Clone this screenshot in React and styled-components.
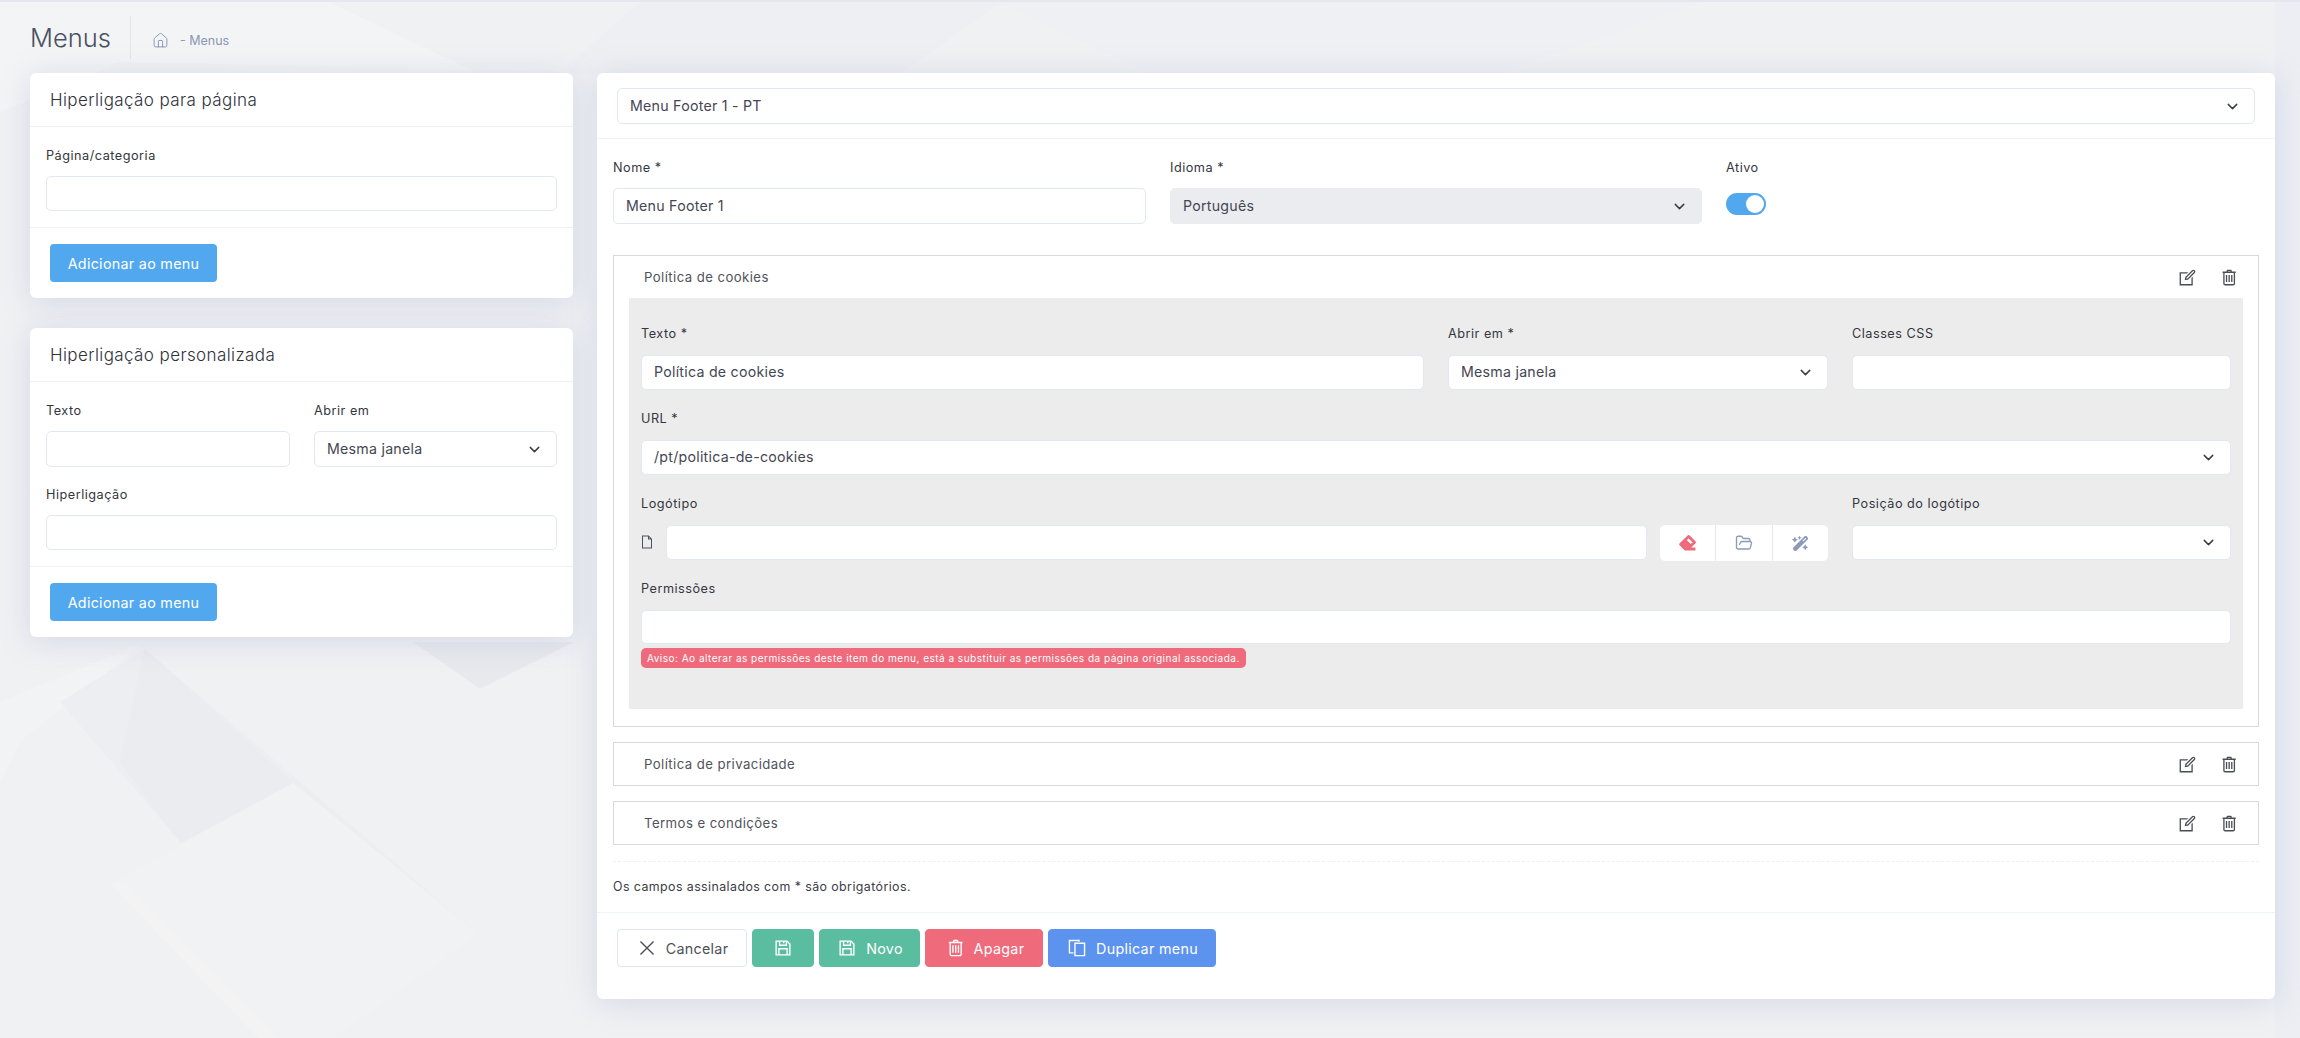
import React from 'react'
import styled, {createGlobalStyle} from 'styled-components'
import {ChevronDown, FolderOpen, House} from 'lucide-react'
import {LiaEdit, LiaTrashAltSolid, LiaSave, LiaTimesSolid, LiaCopy, LiaFile} from 'react-icons/lia'
import {RiEraserFill} from 'react-icons/ri'
import {FaWandMagicSparkles} from 'react-icons/fa6'

const GlobalStyle = createGlobalStyle`
  html, body {
    margin: 0;
    padding: 0;
    background: #f0f1f3;
  }
  * {
    box-sizing: border-box;
  }
  body {
    font-family: Inter, "Noto Sans", sans-serif;
    color: #2b2d36;
  }
`

const Page = styled.div`
  position: relative;
  width: 2300px;
  height: 1038px;
  overflow: hidden;
  border-top: 2px solid #e5e7f0;
`
const Backdrop = styled.svg`
  position: absolute;
  top: 0;
  left: 0;
  width: 2300px;
  height: 1038px;
`
const Layer = styled.div`
  position: relative;
`
const PageHeader = styled.header`
  display: flex;
  align-items: center;
  height: 71px;
  padding-left: 30px;
`
const PageTitle = styled.h1`
  margin: 0 20px 0 0;
  font-size: 25.5px;
  font-weight: 300;
  color: #495163;
  width: 80px;
`
const Divider = styled.span`
  width: 1px;
  height: 43px;
  background: #e2e4ea;
  margin-right: 21px;
`
const Crumb = styled.span`
  display: flex;
  align-items: center;
  gap: 11px;
  margin-top: 6px;
  font-size: 12.5px;
  color: #8c98b4;
  svg {
    width: 17px;
    height: 17px;
    stroke-width: 1.4;
  }
`
const Columns = styled.div`
  display: grid;
  grid-template-columns: 543px 1678px;
  gap: 24px;
  padding-left: 30px;
  align-items: start;
`
const Side = styled.div`
  display: flex;
  flex-direction: column;
  gap: 30px;
`
const Card = styled.section`
  background: #fff;
  border-radius: 6px;
  box-shadow: 0 4px 30px rgba(150, 160, 205, 0.3);
`
const CardTitle = styled.h2`
  margin: 0;
  height: 54px;
  display: flex;
  align-items: center;
  padding: 0 20px;
  font-size: 17px;
  font-weight: 300;
  letter-spacing: 0.4px;
  color: #2f323c;
  border-bottom: 1px solid #eef1f8;
`
const CardBody = styled.div`
  padding: 19px 16px 16px;
  display: flex;
  flex-direction: column;
  gap: 18px;
`
const CardFooter = styled.div`
  border-top: 1px solid #f1f2f6;
  padding: 16px 20px;
  display: flex;
  gap: 5px;
`
const Row = styled.div`
  display: grid;
  grid-template-columns: ${({$cols}) => $cols};
  gap: 24px;
`
const Field = styled.div`
  min-width: 0;
`
const Label = styled.div`
  height: 20px;
  line-height: 20px;
  margin-bottom: ${({$gap}) => $gap || 10}px;
  font-size: 12.7px;
  letter-spacing: 0.5px;
  color: #34363e;
`
const TextInput = styled.input`
  display: block;
  width: 100%;
  height: ${({$h}) => $h || 36}px;
  padding: 0 12px 2px;
  background: #fff;
  border: 1px solid #e3e7f4;
  border-radius: 5px;
  font: inherit;
  font-size: 14.2px;
  letter-spacing: 0.25px;
  color: #434653;
  outline: none;
`
const SelectBox = styled.div`
  display: flex;
  align-items: center;
  justify-content: space-between;
  height: ${({$h}) => $h || 36}px;
  padding: 0 13px 0 12px;
  background: ${({$muted}) => ($muted ? '#ebecf0' : '#fff')};
  border: 1px solid ${({$muted}) => ($muted ? '#ebecf0' : '#e3e7f4')};
  border-radius: 5px;
  font-size: 14.2px;
  letter-spacing: 0.25px;
  color: #434653;
  span {
    margin-top: -2px;
  }
  svg {
    width: 17px;
    height: 17px;
    color: #3a3d47;
  }
`
const PrimaryButton = styled.button`
  width: 167px;
  height: 38px;
  border: 0;
  border-radius: 4px;
  background: #52a8ef;
  color: #fff;
  font: inherit;
  font-size: 14.3px;
  letter-spacing: 0.3px;
`
const MenuSelectRow = styled.div`
  padding: 15px 20px 14px;
  border-bottom: 1px solid #eef1f8;
`
const MainBody = styled.div`
  padding: 19px 16px 15px;
`
const Switch = styled.span`
  display: block;
  position: relative;
  width: 40px;
  height: 22px;
  border-radius: 11px;
  background: #52a8ef;
  &::after {
    content: '';
    position: absolute;
    top: 2px;
    right: 2px;
    width: 18px;
    height: 18px;
    border-radius: 50%;
    background: #fff;
  }
`
const ItemList = styled.div`
  display: flex;
  flex-direction: column;
  gap: 15px;
  margin-top: 31px;
`
const Item = styled.div`
  border: 1px solid #d9d9db;
  background: #fff;
  padding-bottom: ${({$open}) => ($open ? 17 : 0)}px;
`
const ItemHead = styled.div`
  display: flex;
  align-items: center;
  justify-content: space-between;
  height: 42px;
  padding: 0 19px 0 30px;
  font-size: 13.2px;
  letter-spacing: 0.42px;
  color: #50535c;
`
const ItemActions = styled.div`
  display: flex;
  gap: 20px;
  color: #4b4d55;
  svg {
    width: 21px;
    height: 21px;
    display: block;
  }
`
const ItemPanel = styled.div`
  margin: 0 15px;
  padding: 26px 12px 41px;
  background: #ececed;
  display: flex;
  flex-direction: column;
  gap: 19px;
`
const FileRow = styled.div`
  display: flex;
  align-items: flex-start;
`
const FileIcon = styled(LiaFile)`
  flex: none;
  width: 16px;
  height: 16px;
  margin: 9px 11px 0 -2px;
  color: #50525a;
`
const FileButtons = styled.div`
  flex: none;
  display: flex;
  width: 168px;
  height: 36px;
  margin: 0 0 -1px 13px;
  background: #fff;
  border-radius: 5px;
`
const FileButton = styled.span`
  flex: 1;
  display: flex;
  align-items: center;
  justify-content: center;
  color: ${({$color}) => $color};
  border-left: ${({$first}) => ($first ? '0' : '1px solid #e6e9f2')};
  svg {
    width: ${({$size}) => $size || 16}px;
    height: ${({$size}) => $size || 16}px;
    stroke-width: 1.8;
  }
`
const Warning = styled.div`
  width: fit-content;
  height: 20px;
  line-height: 20px;
  margin-top: 4px;
  padding: 0 6px;
  border-radius: 5px;
  background: #ef6a7a;
  color: #fff;
  font-size: 10.1px;
  letter-spacing: 0.45px;
`
const DashedRule = styled.div`
  margin-top: 16px;
  border-top: 1px dashed #eff0f2;
`
const Note = styled.p`
  margin: 15px 0 0;
  line-height: 20px;
  font-size: 12.4px;
  letter-spacing: 0.42px;
  color: #3a3c45;
`
const MainFooter = styled.div`
  border-top: 1px solid #eff3fa;
  padding: 16px 20px 32px;
  display: flex;
  gap: 5px;
`
const ActionButton = styled.button`
  display: flex;
  align-items: center;
  justify-content: center;
  gap: 8px;
  width: ${({$w}) => $w}px;
  height: 38px;
  padding: 0;
  border: 1px solid ${({$bg}) => $bg || '#e1e5f2'};
  border-radius: 4px;
  background: ${({$bg}) => $bg || '#fff'};
  color: ${({$bg}) => ($bg ? '#fff' : '#4e5058')};
  font: inherit;
  font-size: 14.3px;
  letter-spacing: 0.3px;
  svg {
    width: 22px;
    height: 22px;
  }
`

const Select = ({children, ...props}) => (
  <SelectBox {...props}>
    <span>{children}</span>
    <ChevronDown />
  </SelectBox>
)

const AddToMenu = () => (
  <CardFooter>
    <PrimaryButton>Adicionar ao menu</PrimaryButton>
  </CardFooter>
)

const MenuItem = ({title, open, children}) => (
  <Item $open={open}>
    <ItemHead>
      <span>{title}</span>
      <ItemActions>
        <LiaEdit />
        <LiaTrashAltSolid />
      </ItemActions>
    </ItemHead>
    {children}
  </Item>
)

const Background = () => (
  <Backdrop viewBox="0 0 2300 1038">
    <polygon points="0,0 640,0 560,70 120,60 0,110" fill="#f3f4f5" />
    <polygon points="330,0 1000,0 900,72 480,72" fill="#eceef2" opacity="0.5" />
    <polygon points="1000,0 1700,0 1500,72 1150,72" fill="#eff0f4" />
    <polygon points="413,640 480,687 574,640" fill="#e8e9ed" />
    <polygon points="0,700 145,640 20,740 0,780" fill="#f2f3f4" />
    <polygon points="145,647 478,932 293,781 181,841 60,700" fill="#edeef1" />
    <polygon points="145,647 293,781 181,841 120,760" fill="#e9eaee" opacity="0.5" />
    <polygon points="293,781 478,932 330,1038 260,1038 111,882" fill="#f1f2f4" />
    <polygon points="111,882 125,880 280,1038 260,1038" fill="#f3f3f4" />
    <polygon points="2275,0 2300,0 2300,1038 2275,1038" fill="#eceef3" />
  </Backdrop>
)

export default function App() {
  return (
    <Page>
      <GlobalStyle />
      <Background />
      <Layer>
        <PageHeader>
          <PageTitle>Menus</PageTitle>
          <Divider />
          <Crumb>
            <House />
            <span>- Menus</span>
          </Crumb>
        </PageHeader>
        <Columns>
          <Side>
            <Card>
              <CardTitle>Hiperligação para página</CardTitle>
              <CardBody>
                <Field>
                  <Label>Página/categoria</Label>
                  <TextInput readOnly $h={35} />
                </Field>
              </CardBody>
              <AddToMenu />
            </Card>
            <Card>
              <CardTitle>Hiperligação personalizada</CardTitle>
              <CardBody>
                <Row $cols="244px 243px">
                  <Field>
                    <Label>Texto</Label>
                    <TextInput readOnly />
                  </Field>
                  <Field>
                    <Label>Abrir em</Label>
                    <Select>Mesma janela</Select>
                  </Field>
                </Row>
                <Field>
                  <Label>Hiperligação</Label>
                  <TextInput readOnly $h={35} />
                </Field>
              </CardBody>
              <AddToMenu />
            </Card>
          </Side>
          <Card>
            <MenuSelectRow>
              <Select>Menu Footer 1 - PT</Select>
            </MenuSelectRow>
            <MainBody>
              <Row $cols="533px 532px 1fr">
                <Field>
                  <Label>Nome *</Label>
                  <TextInput readOnly defaultValue="Menu Footer 1" />
                </Field>
                <Field>
                  <Label>Idioma *</Label>
                  <Select $muted>Português</Select>
                </Field>
                <Field>
                  <Label $gap={15}>Ativo</Label>
                  <Switch />
                </Field>
              </Row>
              <ItemList>
                <MenuItem title="Política de cookies" open>
                  <ItemPanel>
                    <Row $cols="783px 380px 1fr">
                      <Field>
                        <Label $gap={11}>Texto *</Label>
                        <TextInput readOnly $h={35} defaultValue="Política de cookies" />
                      </Field>
                      <Field>
                        <Label $gap={11}>Abrir em *</Label>
                        <Select $h={35}>Mesma janela</Select>
                      </Field>
                      <Field>
                        <Label $gap={11}>Classes CSS</Label>
                        <TextInput readOnly $h={35} />
                      </Field>
                    </Row>
                    <Field>
                      <Label $gap={11}>URL *</Label>
                      <Select $h={35}>/pt/politica-de-cookies</Select>
                    </Field>
                    <Row $cols="1187px 1fr">
                      <Field>
                        <Label $gap={11}>Logótipo</Label>
                        <FileRow>
                          <FileIcon />
                          <TextInput readOnly $h={35} />
                          <FileButtons>
                            <FileButton $first $color="#ef6a7a" $size={18}>
                              <RiEraserFill />
                            </FileButton>
                            <FileButton $color="#8c9ab8" $size={18}>
                              <FolderOpen />
                            </FileButton>
                            <FileButton $color="#8c9ab8" $size={17}>
                              <FaWandMagicSparkles />
                            </FileButton>
                          </FileButtons>
                        </FileRow>
                      </Field>
                      <Field>
                        <Label $gap={11}>Posição do logótipo</Label>
                        <Select $h={35} />
                      </Field>
                    </Row>
                    <Field>
                      <Label $gap={11}>Permissões</Label>
                      <TextInput readOnly $h={34} />
                      <Warning>
                        Aviso: Ao alterar as permissões deste item do menu, está a substituir as permissões da
                        página original associada.
                      </Warning>
                    </Field>
                  </ItemPanel>
                </MenuItem>
                <MenuItem title="Política de privacidade" />
                <MenuItem title="Termos e condições" />
              </ItemList>
              <DashedRule />
              <Note>Os campos assinalados com * são obrigatórios.</Note>
            </MainBody>
            <MainFooter>
              <ActionButton $w={130}>
                <LiaTimesSolid />
                Cancelar
              </ActionButton>
              <ActionButton $w={62} $bg="#5bbd9f">
                <LiaSave />
              </ActionButton>
              <ActionButton $w={101} $bg="#5bbd9f">
                <LiaSave />
                Novo
              </ActionButton>
              <ActionButton $w={118} $bg="#ef6a7a">
                <LiaTrashAltSolid />
                Apagar
              </ActionButton>
              <ActionButton $w={168} $bg="#5b93ef">
                <LiaCopy />
                Duplicar menu
              </ActionButton>
            </MainFooter>
          </Card>
        </Columns>
      </Layer>
    </Page>
  )
}
